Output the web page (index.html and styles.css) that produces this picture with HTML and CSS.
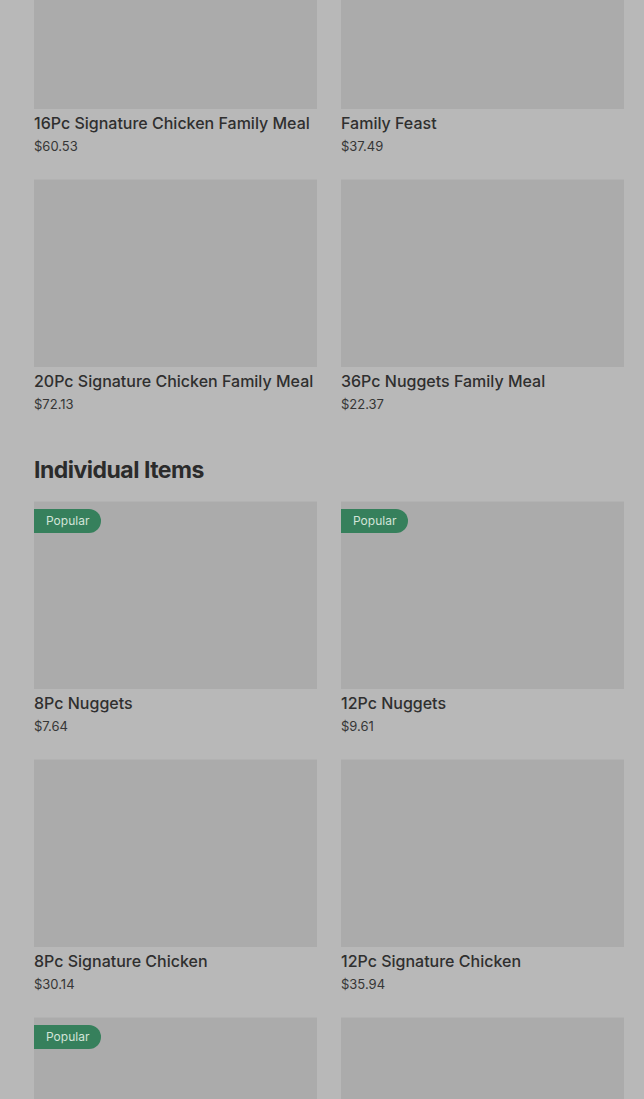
FILE: index.html
```html
<!DOCTYPE html>
<html>
<head lang="en">
    <meta charset="UTF-8">
    <title>Menu</title>
    <link rel="stylesheet" href="styles.css">
</head>
<body>
<div class="menu">
    <section class="section section-first">
        <div class="grid">
            <div class="card">
                <div class="pic"></div>
                <div class="name">16Pc Signature Chicken Family Meal</div>
                <div class="price">$60.53</div>
            </div>
            <div class="card">
                <div class="pic"></div>
                <div class="name">Family Feast</div>
                <div class="price">$37.49</div>
            </div>
            <div class="card">
                <div class="pic"></div>
                <div class="name">20Pc Signature Chicken Family Meal</div>
                <div class="price">$72.13</div>
            </div>
            <div class="card">
                <div class="pic"></div>
                <div class="name">36Pc Nuggets Family Meal</div>
                <div class="price">$22.37</div>
            </div>
        </div>
    </section>

    <section class="section">
        <h2 class="title">Individual Items</h2>
        <div class="grid">
            <div class="card">
                <div class="pic"><span class="badge">Popular</span></div>
                <div class="name">8Pc Nuggets</div>
                <div class="price">$7.64</div>
            </div>
            <div class="card">
                <div class="pic"><span class="badge">Popular</span></div>
                <div class="name">12Pc Nuggets</div>
                <div class="price">$9.61</div>
            </div>
            <div class="card">
                <div class="pic"></div>
                <div class="name">8Pc Signature Chicken</div>
                <div class="price">$30.14</div>
            </div>
            <div class="card">
                <div class="pic"></div>
                <div class="name">12Pc Signature Chicken</div>
                <div class="price">$35.94</div>
            </div>
            <!-- last row: only the top of the pictures is in view -->
            <div class="card">
                <div class="pic"><span class="badge">Popular</span></div>
            </div>
            <div class="card">
                <div class="pic"></div>
            </div>
        </div>
    </section>
</div>
</body>
</html>
```

FILE: styles.css
```css
* {
    margin: 0;
    padding: 0;
}

html, body {
    background-color: #b8b8b8;
}

body {
    font-family: Inter, "Noto Sans", sans-serif;
    color: #2f2f2f;
    overflow: hidden;
}

.menu {
    padding: 0 20px 0 34px;
    margin-top: -79px;
}

.section-first {
    padding-bottom: 40px;
}

.title {
    font-size: 23px;
    line-height: 32px;
    font-weight: 700;
    letter-spacing: -0.5px;
    color: #2b2b2b;
    margin-bottom: 15px;
}

.grid {
    display: grid;
    grid-template-columns: 1fr 1fr;
    column-gap: 24px;
    row-gap: 23px;
}

.pic {
    position: relative;
    height: 188px;
    background-color: #ababab;
    box-shadow: inset 0 1px 0 #b2b2b2;
}

.badge {
    position: absolute;
    top: 8px;
    left: 0;
    height: 24px;
    padding: 0 12px;
    border-radius: 0 12px 12px 0;
    background-color: #36805c;
    color: #d3e4d9;
    font-size: 12px;
    line-height: 24px;
}

.name {
    margin-top: 4px;
    font-size: 16px;
    line-height: 20px;
    font-weight: 500;
    white-space: nowrap;
}

.price {
    margin-top: 3px;
    font-size: 13px;
    line-height: 20px;
    color: #363636;
}
```
